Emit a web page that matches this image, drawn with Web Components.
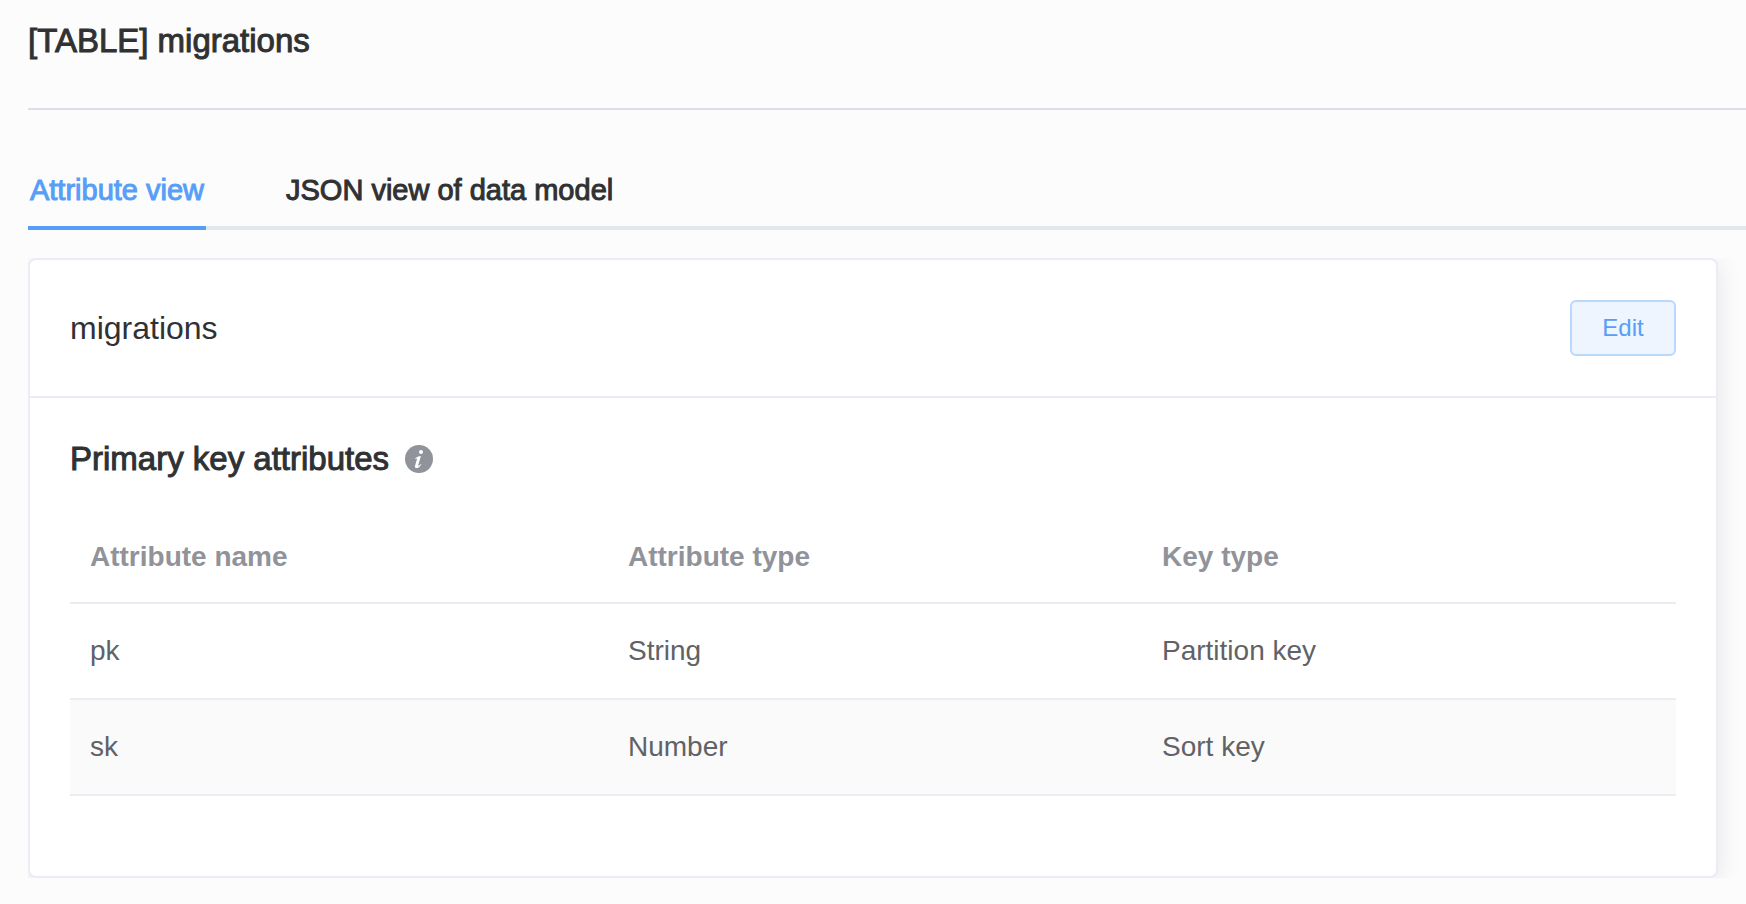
<!DOCTYPE html>
<html lang="en">
<head>
<meta charset="utf-8">
<meta name="viewport" content="width=device-width, initial-scale=1">
<title>migrations</title>
<style>
  :root {
    --primary: #579ef8;
    --text: #303133;
    --text-regular: #606266;
    --text-muted: #909399;
    --border: #ebedf4;
  }
  body {
    margin: 0;
    background: #fcfcfc;
    color: var(--text);
    font-family: "Liberation Sans", Arial, sans-serif;
  }
</style>
</head>
<body>
<table-page>
  <page-header slot="header">[TABLE] migrations</page-header>
  <view-tabs slot="tabs"></view-tabs>
  <model-card>
    <span slot="title">migrations</span>
    <action-button slot="action">Edit</action-button>
    <section-title>Primary key attributes</section-title>
    <attribute-table></attribute-table>
  </model-card>
</table-page>

<script>
  const define = (name, html) => {
    const template = document.createElement('template');
    template.innerHTML = html;
    customElements.define(name, class extends HTMLElement {
      constructor() {
        super();
        this.attachShadow({ mode: 'open' }).append(template.content.cloneNode(true));
      }
    });
  };

  define('table-page', `
    <style>
      :host { display: block; padding: 0 0 26px 28px; }
      .panel { margin-top: 28px; padding-right: 28px; overflow: hidden; }
    </style>
    <slot name="header"></slot>
    <slot name="tabs"></slot>
    <main class="panel"><slot></slot></main>`);

  define('page-header', `
    <style>
      :host { display: block; padding: 20px 0 46px; border-bottom: 2px solid #dcdfe6; }
      h1 { margin: 0; font-size: 33px; line-height: 42px; font-weight: 400; -webkit-text-stroke: 1px; }
    </style>
    <h1><slot></slot></h1>`);

  define('view-tabs', `
    <style>
      :host { display: block; margin-top: 40px; }
      div { display: flex; gap: 80px; box-shadow: inset 0 -4px #e4e7ed; }
      button {
        border: 0; padding: 0; background: none; color: var(--text);
        font: 400 29px/80px "Liberation Sans", Arial, sans-serif;
        -webkit-text-stroke: 1px; min-width: 178px; cursor: pointer;
      }
      button[aria-selected="true"] { color: var(--primary); box-shadow: inset 0 -4px var(--primary); }
    </style>
    <div role="tablist">
      <button role="tab" aria-selected="true">Attribute view</button>
      <button role="tab" aria-selected="false">JSON view of data model</button>
    </div>`);

  define('model-card', `
    <style>
      :host {
        display: block; background: #fff; border: 2px solid var(--border); border-radius: 8px;
        box-shadow: 0 4px 24px rgba(0, 0, 0, .1);
      }
      header {
        display: flex; align-items: center; justify-content: space-between;
        padding: 40px; border-bottom: 2px solid var(--border);
      }
      h2 { margin: 0; font-size: 32px; line-height: 42px; font-weight: 400; }
      section { padding: 40px; }
    </style>
    <header><h2><slot name="title"></slot></h2><slot name="action"></slot></header>
    <section><slot></slot></section>`);

  define('action-button', `
    <style>
      :host { display: block; }
      button {
        display: block; min-width: 106px; padding: 12px 30px; border: 2px solid #b9d8fc; border-radius: 6px;
        background: #eef5fe; color: var(--primary);
        font: 400 24px/28px "Liberation Sans", Arial, sans-serif; cursor: pointer;
      }
    </style>
    <button type="button"><slot></slot></button>`);

  define('section-title', `
    <style>
      :host { display: flex; align-items: center; gap: 16px; }
      h3 { margin: 0; font-size: 33px; line-height: 42px; font-weight: 400; -webkit-text-stroke: 1px; }
      svg { display: block; width: 28px; height: 28px; }
    </style>
    <h3><slot></slot></h3>
    <svg viewBox="0 0 28 28" aria-hidden="true">
      <circle cx="14" cy="14" r="14" fill="#909399"/>
      <circle cx="16" cy="7" r="2" fill="#fff"/>
      <path d="M10.2 13.2C11.8 12.2 13.4 11.4 15.9 11.1L13.3 20C13 21.2 14.1 20.8 16 18.9L16.4 19.4C14.6 22 12.7 23.2 11.2 23C9.9 22.8 9.7 21.7 10.1 20.4L12 14.1C12.3 13.1 11.5 13.3 10.5 13.9Z" fill="#fff"/>
    </svg>`);

  define('attribute-table', `
    <style>
      :host { display: block; margin: 28px 0 40px; }
      table { width: 100%; table-layout: fixed; border-collapse: separate; border-spacing: 0; font-size: 28px; line-height: 32px; }
      .first { width: 33.5%; }
      th, td { padding: 31px 20px; border-bottom: 2px solid var(--border); text-align: left; }
      th { padding: 33px 20px 29px; color: var(--text-muted); font-weight: 700; }
      td { color: var(--text-regular); }
      tbody tr:nth-child(even) { background: #fafafa; }
    </style>
    <table>
      <colgroup><col class="first"><col><col></colgroup>
      <thead><tr><th scope="col">Attribute name</th><th scope="col">Attribute type</th><th scope="col">Key type</th></tr></thead>
      <tbody>
        <tr><td>pk</td><td>String</td><td>Partition key</td></tr>
        <tr><td>sk</td><td>Number</td><td>Sort key</td></tr>
      </tbody>
    </table>`);
</script>
</body>
</html>
